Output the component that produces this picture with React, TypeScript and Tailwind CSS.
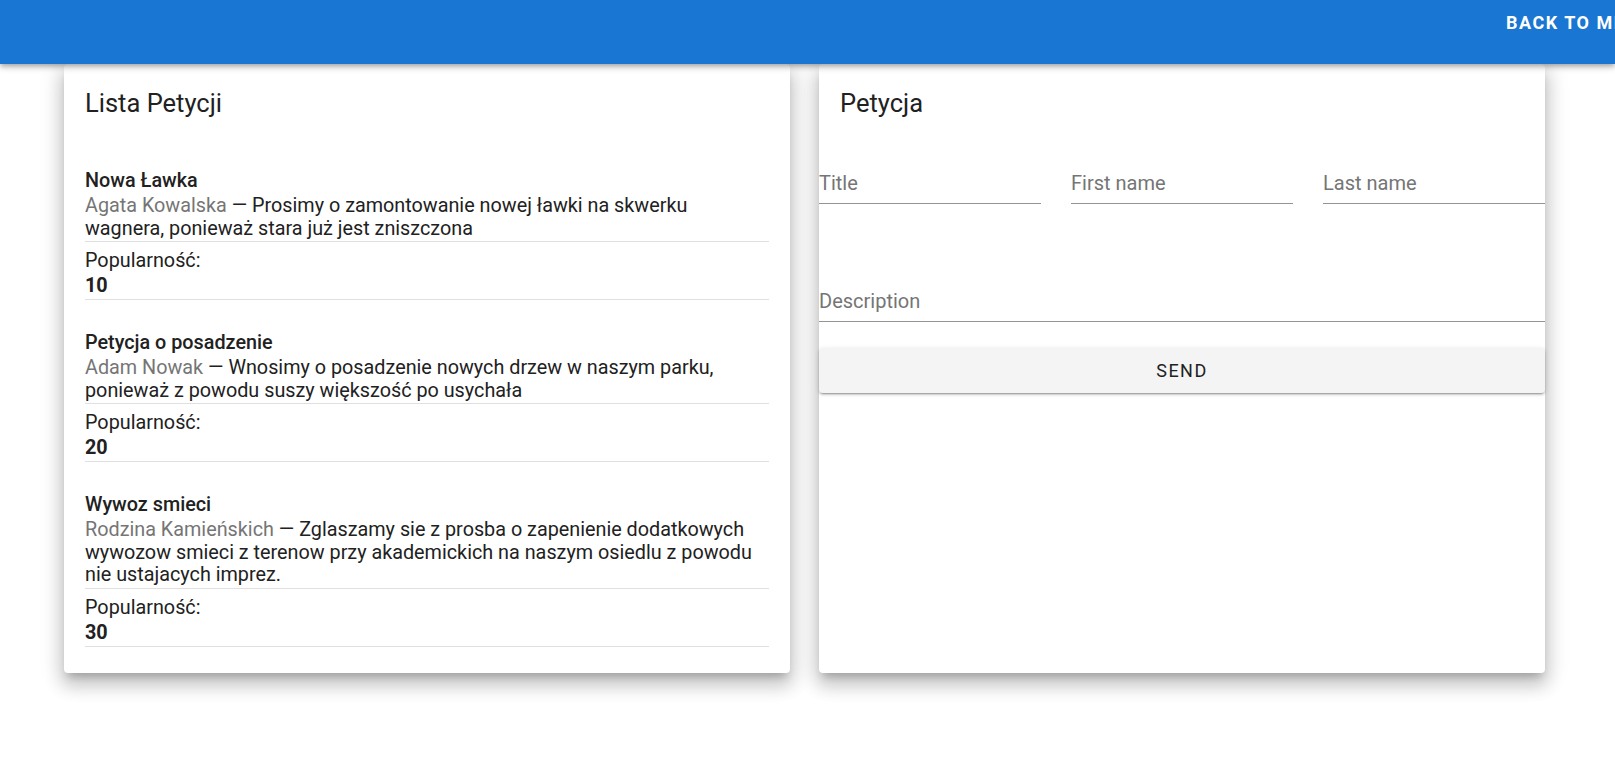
import React from "react";

type Petition = {
  title: string;
  author: string;
  text: string;
  popularity: number;
};

const petitions: Petition[] = [
  {
    title: "Nowa Ławka",
    author: "Agata Kowalska",
    text: "Prosimy o zamontowanie nowej ławki na skwerku wagnera, ponieważ stara już jest zniszczona",
    popularity: 10,
  },
  {
    title: "Petycja o posadzenie",
    author: "Adam Nowak",
    text: "Wnosimy o posadzenie nowych drzew w naszym parku, ponieważ z powodu suszy większość po usychała",
    popularity: 20,
  },
  {
    title: "Wywoz smieci",
    author: "Rodzina Kamieńskich",
    text: "Zglaszamy sie z prosba o zapenienie dodatkowych wywozow smieci z terenow przy akademickich na naszym osiedlu z powodu nie ustajacych imprez.",
    popularity: 30,
  },
];

const cardShadow =
  "shadow-[0px_7px_8px_-4px_rgba(0,0,0,0.2),0px_12px_17px_2px_rgba(0,0,0,0.14),0px_5px_22px_4px_rgba(0,0,0,0.12)]";

function PetitionItem({ p }: { p: Petition }) {
  return (
    <li className="pt-[31px] first:pt-[50px]">
      <div className="font-medium leading-[23px]">{p.title}</div>
      <div className="mt-[3px] leading-[22.5px] w-[684px]">
        <span className="text-[#757575]">{p.author}</span> — {p.text}
      </div>
      <div className="mt-[1px] h-px bg-[#e0e0e0]" />
      <div className="pt-[7px] leading-[23px]">Popularność:</div>
      <div className="mt-[2px] font-bold leading-[23px]">{p.popularity}</div>
      <div className="mt-[2px] h-px bg-[#e0e0e0]" />
    </li>
  );
}

function Field({ label, className }: { label: string; className?: string }) {
  return (
    <div className={`border-b border-[#949494] pb-[8px] ${className ?? ""}`}>
      <div className="text-[20px] leading-[24px] text-[#757575]">{label}</div>
    </div>
  );
}

export default function App() {
  return (
    <div className="min-h-screen bg-white text-[19.8px] text-[#212121] font-['Roboto',sans-serif]">
      <header className="relative z-10 h-[64px] bg-[#1976d2] overflow-hidden shadow-[0px_2px_4px_-1px_rgba(0,0,0,0.2),0px_4px_5px_0px_rgba(0,0,0,0.14),0px_1px_10px_0px_rgba(0,0,0,0.12)]">
        <div className="flex justify-start pl-[1506px] pt-[13px]">
          <button className="whitespace-nowrap text-[18px] font-bold uppercase tracking-[1.5px] text-white leading-[20px]">
            Back to menu
          </button>
        </div>
      </header>

      <main className="flex gap-[29px] pl-[64px]">
        <section className={`w-[726px] rounded-[4px] bg-white px-[21px] pb-[26px] ${cardShadow}`}>
          <h2 className="pt-[23px] text-[25.5px] leading-[32px]">Lista Petycji</h2>
          <ul>
            {petitions.map((p) => (
              <PetitionItem key={p.title} p={p} />
            ))}
          </ul>
        </section>

        <section className={`w-[726px] rounded-[4px] bg-white ${cardShadow}`}>
          <h2 className="px-[21px] pt-[23px] text-[25.5px] leading-[32px]">Petycja</h2>
          <form className="mt-[52px]">
            <div className="grid grid-cols-3 gap-x-[30px]">
              <Field label="Title" />
              <Field label="First name" />
              <Field label="Last name" />
            </div>
            <Field label="Description" className="mt-[85px]" />
            <button
              type="button"
              className="mt-[26px] h-[45px] w-full rounded-[4px] bg-[#f4f4f4] text-[18px] font-normal uppercase tracking-[1.5px] text-[#212121] shadow-[0px_3px_1px_-2px_rgba(0,0,0,0.2),0px_2px_2px_0px_rgba(0,0,0,0.14),0px_1px_5px_0px_rgba(0,0,0,0.12)]"
            >
              Send
            </button>
          </form>
        </section>
      </main>
    </div>
  );
}
